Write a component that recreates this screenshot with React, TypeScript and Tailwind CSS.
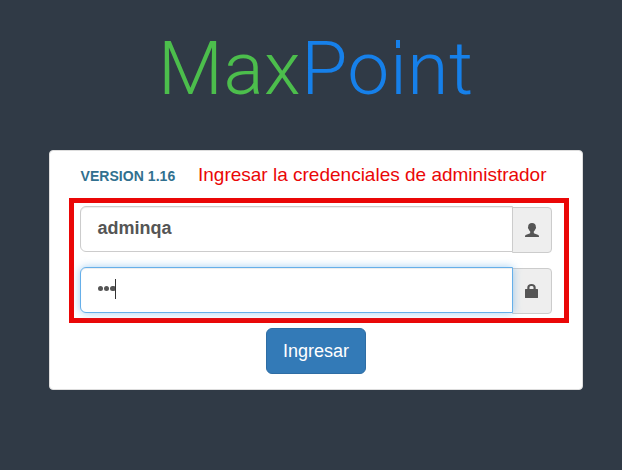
import React from "react";

const UserIcon = () => (
  <svg width="14" height="14" viewBox="0 0 14 14" fill="#555">
    <path d="M7 0C4.500 0 3.200 1.400 3.200 3.500c0 .5-.4.8-.2 1.600.1.500.5.8.7 1.100.3 1 .8 1.800 1.500 2.400v1.200c0 .4-.2.6-.6.8L1.300 11.800C.3 12.200 0 12.700 0 14h14c0-1.300-.3-1.800-1.300-2.200l-3.300-1.200c-.4-.2-.6-.4-.6-.8V8.600c.7-.6 1.200-1.400 1.500-2.400.2-.3.600-.6.700-1.100.2-.8-.2-1.100-.2-1.600C10.800 1.400 9.500 0 7 0z" />
  </svg>
);

const LockIcon = () => (
  <svg width="14" height="14" viewBox="0 0 14 14" fill="#555">
    <path d="M2.300 5V3.500C2.300 1.300 3.900 0 6.500 0s4.200 1.300 4.200 3.500V5h1.700c.4 0 .6.200.6.600v7.800c0 .4-.2.600-.6.600H.6c-.4 0-.6-.2-.6-.6V5.600C0 5.200.2 5 .6 5zM4.500 5h4V3.500C8.500 2.500 7.800 2 6.500 2s-2 .5-2 1.500z" />
  </svg>
);

function Field({ focused = false, icon, children }: { focused?: boolean; icon: React.ReactNode; children: React.ReactNode }) {
  return (
    <div className="flex h-[47px] items-start">
      <div
        className={
          "relative z-10 flex h-[46px] w-[433px] items-center rounded-l-md border bg-white pl-[16.500px] pb-[3px] text-[18px] leading-6 font-bold text-[#555] " +
          (focused
            ? "border-[#66afe9] shadow-[inset_0_1px_1px_rgba(0,0,0,0.075),0_0_8px_rgba(102,175,233,0.6)]"
            : "border-[#ccc] shadow-[inset_0_1px_1px_rgba(0,0,0,0.075)]")
        }
      >
        {children}
      </div>
      <div className="mt-px -ml-px flex h-[46px] w-10 items-center rounded-r-[4px] border border-[#ccc] bg-[#eee] pl-[11.500px]">
        {icon}
      </div>
    </div>
  );
}

export default function App() {
  return (
    <main className="flex h-[470px] w-[622px] flex-col overflow-hidden bg-[#303a46] font-['Liberation_Sans',Arial,sans-serif]">
      <h1 className="h-[150px] pt-[24px] pl-[158px] font-['Roboto',sans-serif] text-[75px] leading-[88px] font-light tracking-[0.5px] whitespace-nowrap text-[#4cbe4c]">
        Max
        <span className="text-[#1680ea]">
          Po
          {/* squared-off dot over the i */}
          <span className="relative inline-block">
            i
            <i className="absolute top-[16px] left-[6px] h-[8px] w-[4px] bg-[#1680ea] shadow-[3px_0_0_#303a46,-3px_0_0_#303a46]" />
          </span>
          nt
        </span>
      </h1>
      <section className="ml-[49px] flex h-[240px] w-[534px] flex-col rounded-[4px] border border-[#ddd] bg-white">
        <div className="flex h-[47px] items-start pl-[30px] whitespace-nowrap">
          <span className="w-[118px] pt-[15px] pl-[0.500px] text-[14px] leading-5 font-bold tracking-[0.05px] text-[#31708f]">VERSION 1.16</span>
          <span className="pt-3 text-[19px] leading-6 text-[#ea0707]">Ingresar la credenciales de administrador</span>
        </div>
        <div className="ml-[19px] flex h-[125px] w-[500px] flex-col gap-[14px] border-[5px] border-[#ea0707] pt-[3px] pl-[6px]">
          <Field icon={<UserIcon />}>adminqa</Field>
          <Field focused icon={<LockIcon />}>
            <span className="flex items-center gap-[0.800px]">
              <i className="size-[5.500px] rounded-full bg-[#555]" />
              <i className="size-[5.500px] rounded-full bg-[#555]" />
              <i className="size-[5.500px] rounded-full bg-[#555]" />
            </span>
            <i className="-ml-[0.600px] h-5 w-px bg-[#333]" />
          </Field>
        </div>
        <button className="mt-[5px] ml-[216px] h-[46px] w-[100px] rounded-md border border-[#2e6da4] bg-[#337ab7] text-[18px] leading-6 text-white">
          Ingresar
        </button>
      </section>
    </main>
  );
}
